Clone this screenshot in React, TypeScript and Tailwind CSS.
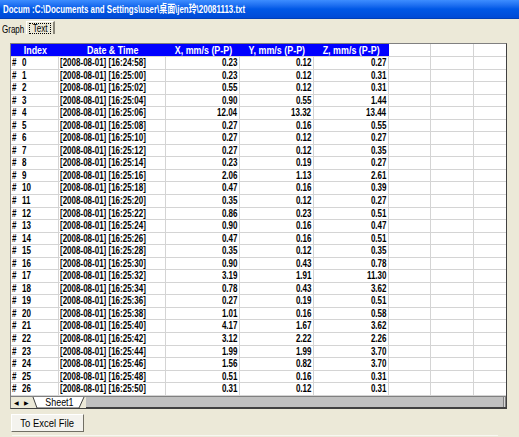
import React from "react";

const rows: [string, string, string, string][] = [
  ["16:24:58", "0.23", "0.12", "0.27"],
  ["16:25:00", "0.23", "0.12", "0.31"],
  ["16:25:02", "0.55", "0.12", "0.31"],
  ["16:25:04", "0.90", "0.55", "1.44"],
  ["16:25:06", "12.04", "13.32", "13.44"],
  ["16:25:08", "0.27", "0.16", "0.55"],
  ["16:25:10", "0.27", "0.12", "0.27"],
  ["16:25:12", "0.27", "0.12", "0.35"],
  ["16:25:14", "0.23", "0.19", "0.27"],
  ["16:25:16", "2.06", "1.13", "2.61"],
  ["16:25:18", "0.47", "0.16", "0.39"],
  ["16:25:20", "0.35", "0.12", "0.27"],
  ["16:25:22", "0.86", "0.23", "0.51"],
  ["16:25:24", "0.90", "0.16", "0.47"],
  ["16:25:26", "0.47", "0.16", "0.51"],
  ["16:25:28", "0.35", "0.12", "0.35"],
  ["16:25:30", "0.90", "0.43", "0.78"],
  ["16:25:32", "3.19", "1.91", "11.30"],
  ["16:25:34", "0.78", "0.43", "3.62"],
  ["16:25:36", "0.27", "0.19", "0.51"],
  ["16:25:38", "1.01", "0.16", "0.58"],
  ["16:25:40", "4.17", "1.67", "3.62"],
  ["16:25:42", "3.12", "2.22", "2.26"],
  ["16:25:44", "1.99", "1.99", "3.70"],
  ["16:25:46", "1.56", "0.82", "3.70"],
  ["16:25:48", "0.51", "0.16", "0.31"],
  ["16:25:50", "0.31", "0.12", "0.31"],
];

const cols = "grid grid-cols-[48px_107px_74px_74px_75px_42px_43px_1fr]";

// the old control draws its text condensed, so squeeze it horizontally
function L({ children }: { children: React.ReactNode }) {
  return <span className="inline-block whitespace-nowrap scale-x-[0.8] origin-left">{children}</span>;
}
function R({ children }: { children: React.ReactNode }) {
  return <span className="inline-block whitespace-nowrap scale-x-[0.8] origin-right">{children}</span>;
}
function C({ children }: { children: React.ReactNode }) {
  return <span className="inline-block whitespace-nowrap scale-x-[0.81] origin-center">{children}</span>;
}

export default function App() {
  return (
    <div className="w-[519px] h-[437px] overflow-hidden bg-[#ECE9D8] flex flex-col font-['Liberation_Sans',Arial,sans-serif] text-black">
      {/* TITLE BAR */}
      <div className="h-[19px] shrink-0 flex items-center px-[3px] bg-gradient-to-b from-[#3d8dff] via-[#0058e6] to-[#004ad6] border-b border-[#003fb8]">
        <span className="inline-block whitespace-nowrap scale-x-[0.72] origin-left text-white font-bold text-[11px] leading-none font-['Liberation_Sans','Noto_Sans_CJK_TC',sans-serif]">
          Docum&nbsp;:C:\Documents and Settings\user\桌面\jen玲\20081113.txt
        </span>
      </div>

      {/* TABS */}
      <div className="h-[24px] shrink-0 flex items-start pt-[2px] pl-[2px] text-[10px]">
        <span className="w-[24px] mt-[4px] leading-none">
          <L>Graph</L>
        </span>
        <div className="w-[29px] h-[13px] border-t border-l border-white border-r-2 border-r-[#8a877a] bg-[#ECE9D8] flex items-center justify-center">
          <span className="border border-dotted border-black leading-[9px] w-[22px] text-center">
            <C>Text</C>
          </span>
        </div>
      </div>

      {/* SHEET */}
      <div className="ml-[10px] w-[497px] h-[366px] shrink-0 border border-[#808080] border-r-[#404040] border-b-[#404040] bg-white flex flex-col">
        <div className={`${cols} h-[12px] shrink-0 text-[11px] font-bold leading-[12px]`}>
          <div className="bg-[#0000ff] text-white text-center"><C>Index</C></div>
          <div className="bg-[#0000ff] text-white text-center"><C>Date &amp; Time</C></div>
          <div className="bg-[#0000ff] text-white text-center"><C>X, mm/s (P-P)</C></div>
          <div className="bg-[#0000ff] text-white text-center"><C>Y, mm/s (P-P)</C></div>
          <div className="bg-[#0000ff] text-white text-center"><C>Z, mm/s (P-P)</C></div>
          <div className="border-r border-[#d4d4d4]" />
          <div className="border-r border-[#d4d4d4]" />
          <div />
        </div>
        {rows.map((r, i) => (
          <div key={i} className={`${cols} h-[12.55px] shrink-0 text-[10px] font-bold leading-[12px] border-t border-[#d4d4d4]`}>
            <div className="border-r border-[#d4d4d4] pl-[1px] flex">
              <span className="w-[10px]"><L>#</L></span>
              <L>{i}</L>
            </div>
            <div className="border-r border-[#d4d4d4] pl-[1px]">
              <L>[2008-08-01] [{r[0]}]</L>
            </div>
            <div className="border-r border-[#d4d4d4] text-right pr-[2px]"><R>{r[1]}</R></div>
            <div className="border-r border-[#d4d4d4] text-right pr-[2px]"><R>{r[2]}</R></div>
            <div className="border-r border-[#d4d4d4] text-right pr-[2px]"><R>{r[3]}</R></div>
            <div className="border-r border-[#d4d4d4]" />
            <div className="border-r border-[#d4d4d4]" />
            <div />
          </div>
        ))}
        <div className="flex-1 border-t border-[#d4d4d4]" />

        {/* SHEET TAB BAR */}
        <div className="h-[12px] shrink-0 flex bg-[#ECE9D8] border-t border-[#808080]">
          <div className="w-[20px] flex items-center justify-around text-[6px] leading-none text-black">
            <span>◀</span>
            <span>▶</span>
          </div>
          <div className="relative w-[55px] h-full">
            <svg className="absolute inset-0" width="55" height="12" viewBox="0 0 55 12">
              <polygon points="2,0 53,0 48,11 6,11" fill="#ffffff" />
              <line x1="2" y1="0" x2="6" y2="11" stroke="#404040" />
              <line x1="6" y1="11" x2="48" y2="11" stroke="#404040" />
              <line x1="48" y1="11" x2="53" y2="0" stroke="#404040" />
            </svg>
            <span className="relative block text-center text-[11px] leading-[11px] pl-[2px]">
              <C>Sheet1</C>
            </span>
          </div>
          <div className="flex-1 flex bg-[#c0c0c0] border-b border-[#404040]">
            <div className="flex-1" />
            <div className="w-[3px] border-l border-[#808080] border-r border-[#404040] bg-[#d8d8d8]" />
          </div>
        </div>
      </div>

      {/* BUTTON */}
      <div className="flex-1 flex flex-col pl-[11px] pt-[5px]">
        <button className="w-[73px] h-[18px] bg-[#f4f3ee] border border-t-white border-l-white border-r-[#716f64] border-b-[#716f64] text-[11px] leading-none text-black">
          <span className="inline-block whitespace-nowrap scale-x-[0.86] origin-center">To Excel File</span>
        </button>
        <div className="mt-auto mb-[1px] ml-[1px] w-[486px] h-px bg-[#f8f7f2]" />
      </div>
    </div>
  );
}
